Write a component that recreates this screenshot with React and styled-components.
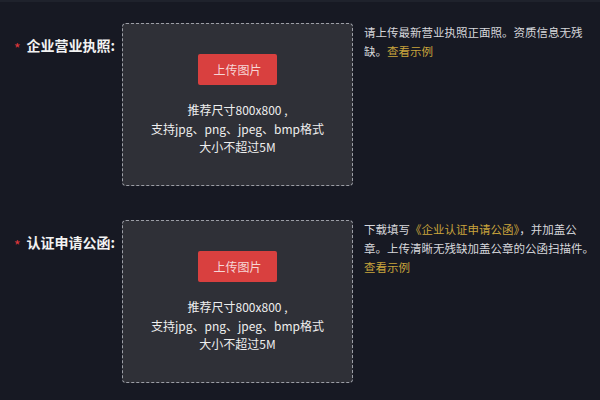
import React from "react";
import styled, { createGlobalStyle } from "styled-components";

const GlobalStyle = createGlobalStyle`
  html, body {
    margin: 0;
    padding: 0;
    background: #171923;
    overflow: hidden;
  }
  body {
    font-family: "Noto Sans CJK SC", "Noto Sans", "Liberation Sans", sans-serif;
  }
`;

const Page = styled.div`
  width: 600px;
  height: 400px;
  box-sizing: border-box;
  border-top: 2px solid #1f222c;
  padding-top: 21px;
  display: flex;
  flex-direction: column;
  gap: 34px;
`;

const Row = styled.div`
  display: grid;
  grid-template-columns: 122px 231px auto;
  align-items: start;
`;

const Label = styled.div`
  margin-top: 12px;
  padding-right: 7px;
  text-align: right;
  font-size: 14px;
  line-height: 20px;
  font-weight: 700;
  color: #f2f2f2;
  white-space: nowrap;
`;

const Star = styled.span`
  color: #e0373b;
  margin-right: 6px;
  font-weight: 400;
  vertical-align: -3px;
`;

const UploadBox = styled.div`
  box-sizing: border-box;
  height: 163px;
  background: #2f3037;
  border: 1px dashed #9c9ea6;
  border-radius: 4px;
  padding-top: 30px;
  display: flex;
  flex-direction: column;
  align-items: center;
`;

const UploadButton = styled.button`
  width: 79px;
  height: 31px;
  border: none;
  border-radius: 2px;
  background: #d9403f;
  color: #f6d6d6;
  font-family: inherit;
  font-size: 12px;
  padding: 0;
  cursor: pointer;
`;

const Tips = styled.div`
  margin-top: 16px;
  font-size: 12px;
  line-height: 18.5px;
  color: #eeeeee;
  text-align: center;
`;

const Hint = styled.div`
  width: 232px;
  margin-left: 11px;
  font-size: 11.5px;
  line-height: 19px;
  color: #d6d7db;
`;

const Link = styled.a`
  color: #c9a43c;
  text-decoration: none;
  cursor: pointer;
`;

const Gold = styled.span`
  color: #c9a43c;
`;

function UploadField({ label, children }) {
  return (
    <Row>
      <Label>
        <Star>*</Star>
        {label}
      </Label>
      <UploadBox>
        <UploadButton>上传图片</UploadButton>
        <Tips>
          推荐尺寸800x800 ,
          <br />
          支持jpg、png、jpeg、bmp格式
          <br />
          大小不超过5M
        </Tips>
      </UploadBox>
      <Hint>{children}</Hint>
    </Row>
  );
}

export default function App() {
  return (
    <>
      <GlobalStyle />
      <Page>
        <UploadField label="企业营业执照:">
          请上传最新营业执照正面照。资质信息无残缺。<Link>查看示例</Link>
        </UploadField>
        <UploadField label="认证申请公函:">
          下载填写<Gold>《企业认证申请公函》</Gold>，并加盖公章。上传清晰无残缺加盖公章的公函扫描件。
          <Link>查看示例</Link>
        </UploadField>
      </Page>
    </>
  );
}
